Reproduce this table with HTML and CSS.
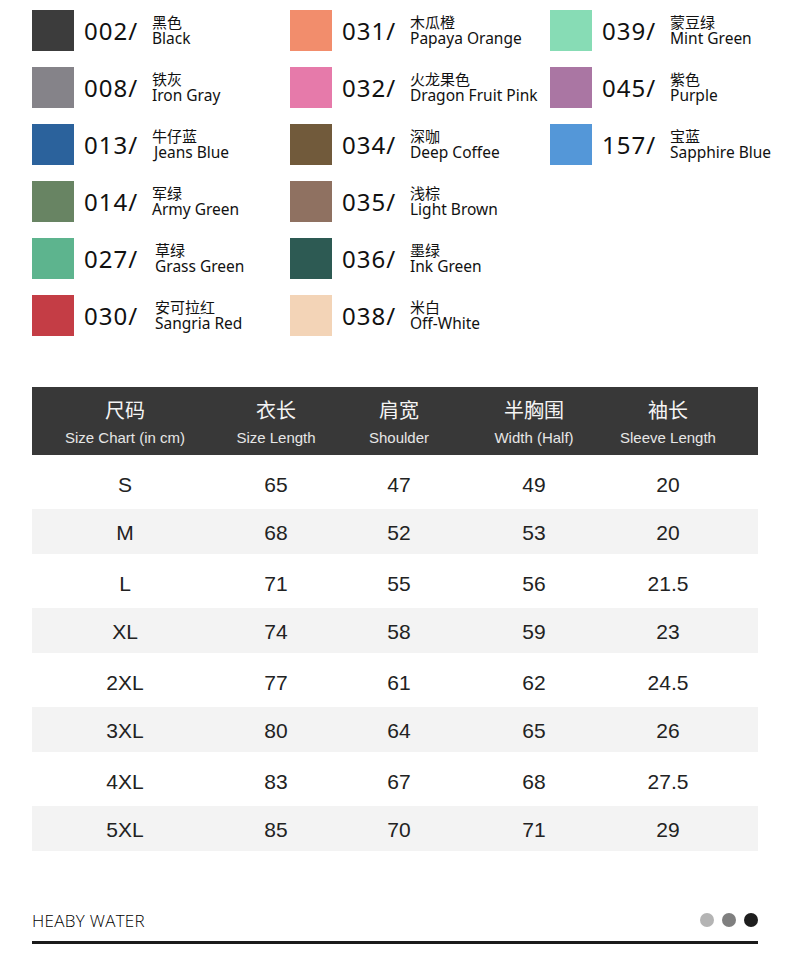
FILE: index.html
```html
<!DOCTYPE html>
<html lang="zh">
<head>
<meta charset="utf-8">
<title>Colors &amp; Size Chart</title>
<link rel="stylesheet" href="styles.css">
</head>
<body>
<section class="colors">
  <div class="col">
    <div class="item"><span class="sw" style="background:#3c3c3c"></span><span class="code">002/</span><span class="name"><span class="zh">黑色</span><span class="en">Black</span></span></div>
    <div class="item"><span class="sw" style="background:#858389"></span><span class="code">008/</span><span class="name"><span class="zh">铁灰</span><span class="en">Iron Gray</span></span></div>
    <div class="item"><span class="sw" style="background:#2b629c"></span><span class="code">013/</span><span class="name"><span class="zh">牛仔蓝</span><span class="en shift">Jeans Blue</span></span></div>
    <div class="item"><span class="sw" style="background:#688463"></span><span class="code">014/</span><span class="name"><span class="zh">军绿</span><span class="en">Army Green</span></span></div>
    <div class="item"><span class="sw" style="background:#5db48e"></span><span class="code">027/</span><span class="name shift"><span class="zh">草绿</span><span class="en">Grass Green</span></span></div>
    <div class="item"><span class="sw" style="background:#c43d45"></span><span class="code">030/</span><span class="name shift"><span class="zh">安可拉红</span><span class="en">Sangria Red</span></span></div>
  </div>
  <div class="col">
    <div class="item"><span class="sw" style="background:#f28d6c"></span><span class="code">031/</span><span class="name"><span class="zh">木瓜橙</span><span class="en">Papaya Orange</span></span></div>
    <div class="item"><span class="sw" style="background:#e67aaa"></span><span class="code">032/</span><span class="name"><span class="zh">火龙果色</span><span class="en">Dragon Fruit Pink</span></span></div>
    <div class="item"><span class="sw" style="background:#715a3b"></span><span class="code">034/</span><span class="name"><span class="zh">深咖</span><span class="en">Deep Coffee</span></span></div>
    <div class="item"><span class="sw" style="background:#8f7161"></span><span class="code">035/</span><span class="name"><span class="zh">浅棕</span><span class="en">Light Brown</span></span></div>
    <div class="item"><span class="sw" style="background:#2d5a53"></span><span class="code">036/</span><span class="name"><span class="zh">墨绿</span><span class="en">Ink Green</span></span></div>
    <div class="item"><span class="sw" style="background:#f3d4b7"></span><span class="code">038/</span><span class="name"><span class="zh">米白</span><span class="en">Off-White</span></span></div>
  </div>
  <div class="col">
    <div class="item"><span class="sw" style="background:#87dcb5"></span><span class="code">039/</span><span class="name"><span class="zh">蒙豆绿</span><span class="en">Mint Green</span></span></div>
    <div class="item"><span class="sw" style="background:#aa76a3"></span><span class="code">045/</span><span class="name"><span class="zh">紫色</span><span class="en">Purple</span></span></div>
    <div class="item"><span class="sw" style="background:#5497d8"></span><span class="code">157/</span><span class="name"><span class="zh">宝蓝</span><span class="en">Sapphire Blue</span></span></div>
  </div>
</section>

<section class="chart">
  <div class="row head">
    <div class="cell"><span class="hz">尺码</span><span class="he">Size Chart (in cm)</span></div>
    <div class="cell"><span class="hz">衣长</span><span class="he">Size Length</span></div>
    <div class="cell"><span class="hz">肩宽</span><span class="he">Shoulder</span></div>
    <div class="cell"><span class="hz">半胸围</span><span class="he">Width (Half)</span></div>
    <div class="cell"><span class="hz">袖长</span><span class="he">Sleeve Length</span></div>
  </div>
  <div class="row light"><div class="cell">S</div><div class="cell">65</div><div class="cell">47</div><div class="cell">49</div><div class="cell">20</div></div>
  <div class="row grey"><div class="cell">M</div><div class="cell">68</div><div class="cell">52</div><div class="cell">53</div><div class="cell">20</div></div>
  <div class="row light"><div class="cell">L</div><div class="cell">71</div><div class="cell">55</div><div class="cell">56</div><div class="cell">21.5</div></div>
  <div class="row grey"><div class="cell">XL</div><div class="cell">74</div><div class="cell">58</div><div class="cell">59</div><div class="cell">23</div></div>
  <div class="row light"><div class="cell">2XL</div><div class="cell">77</div><div class="cell">61</div><div class="cell">62</div><div class="cell">24.5</div></div>
  <div class="row grey"><div class="cell">3XL</div><div class="cell">80</div><div class="cell">64</div><div class="cell">65</div><div class="cell">26</div></div>
  <div class="row light"><div class="cell">4XL</div><div class="cell">83</div><div class="cell">67</div><div class="cell">68</div><div class="cell">27.5</div></div>
  <div class="row grey"><div class="cell">5XL</div><div class="cell">85</div><div class="cell">70</div><div class="cell">71</div><div class="cell">29</div></div>
</section>

<footer class="foot">
  <div class="foot-top">
    <span class="brand">HEABY WATER</span>
    <span class="dots"><i class="dot d1"></i><i class="dot d2"></i><i class="dot d3"></i></span>
  </div>
  <div class="rule"></div>
</footer>
</body>
</html>
```

FILE: styles.css
```css
* { box-sizing: border-box; }
html, body { margin: 0; padding: 0; background: #fff; }
body {
  width: 790px;
  font-family: "Noto Sans", "Noto Sans CJK SC", sans-serif;
  color: #111;
}

.colors {
  display: grid;
  grid-template-columns: 258px 260px 1fr;
  padding: 10px 0 0 32px;
}
.col { display: flex; flex-direction: column; gap: 16px; }
.item { display: flex; align-items: flex-start; height: 41px; }
.sw { width: 42px; height: 41px; flex: none; }
.code {
  width: 68px;
  margin-left: 10px;
  font-size: 24px;
  line-height: 41px;
  color: #111;
  letter-spacing: 1px;
}
.name {
  display: flex;
  flex-direction: column;
  padding-top: 4px;
}
.name.shift { padding-left: 3px; }
.en.shift { padding-left: 2px; }
.zh {
  font-family: "Noto Sans CJK SC", sans-serif;
  font-size: 15px;
  line-height: 16px;
  color: #111;
}
.en {
  font-size: 15.5px;
  line-height: 17px;
  color: #111;
}

.chart {
  margin: 51px 32px 0 32px;
  width: 726px;
}
.row {
  display: grid;
  grid-template-columns: 186px 116px 130px 140px 128px 26px;
  font-family: "Liberation Sans", Arial, sans-serif;
}
.row .cell {
  display: flex;
  align-items: center;
  justify-content: center;
  font-size: 21px;
  color: #222;
  padding-top: 6px;
}
.row.light { height: 54px; }
.row.grey { height: 45px; background: #f3f3f3; }
.row.grey .cell { padding-top: 3px; }
.head {
  height: 68px;
  background: #383838;
}
.head .cell {
  flex-direction: column;
  padding-top: 0;
}
.hz {
  font-family: "Noto Sans CJK SC", sans-serif;
  font-size: 20px;
  line-height: 26px;
  color: #f4f4f4;
  margin-top: 2px;
}
.he {
  font-family: "Liberation Sans", Arial, sans-serif;
  font-size: 15px;
  line-height: 20px;
  color: #e6e6e6;
  margin-top: 5px;
}

.foot {
  margin: 58px 32px 0 32px;
  width: 726px;
}
.foot-top {
  display: flex;
  justify-content: space-between;
  align-items: center;
  height: 22px;
}
.brand {
  font-family: "Open Sans", sans-serif;
  font-weight: 300;
  font-size: 17px;
  color: #000;
  letter-spacing: 0.3px;
}
.dots { display: flex; gap: 8px; }
.dot { width: 14px; height: 14px; border-radius: 50%; display: block; }
.d1 { background: #b4b4b4; }
.d2 { background: #7f7f7f; }
.d3 { background: #1e1e1e; }
.rule {
  margin-top: 10px;
  height: 3px;
  background: #1b1b1b;
}
```
